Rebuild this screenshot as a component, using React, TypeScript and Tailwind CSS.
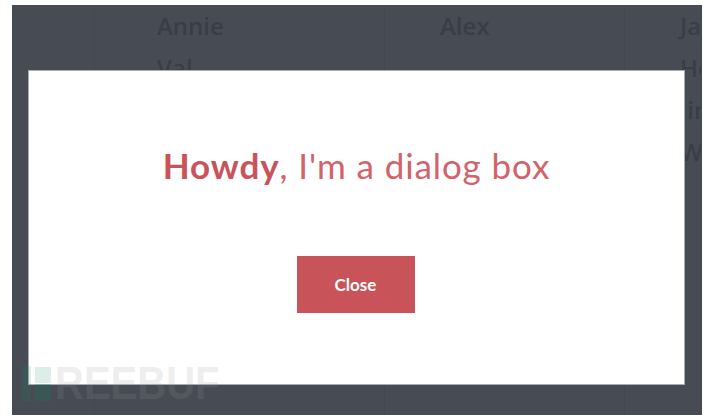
import { useState } from "react";

const columns = [
  { width: "w-[83px]", pad: "pl-0", rows: [] as string[] },
  { width: "w-[290px]", pad: "pl-[62px]", rows: ["Annie", "Val"] },
  { width: "w-[240px]", pad: "pl-[55px]", rows: ["Alex"] },
  { width: "flex-1", pad: "pl-[55px]", rows: ["Ja", "Ho", "Jin", "W"] },
];

export default function App() {
  const [open, setOpen] = useState(true);

  return (
    <div className="relative w-[712px] h-[419px] bg-white pt-[5px] pl-[12px] overflow-hidden font-['Lato',sans-serif]">
      <div className="relative w-[690px] h-[410px] bg-[#474c54] overflow-hidden">
        {/* table behind the overlay */}
        <div className="flex h-full">
          {columns.map((col, i) => (
            <div
              key={i}
              className={`${col.width} ${col.pad} h-full border-r border-[#43484f] flex flex-col pt-0 overflow-hidden`}
            >
              {col.rows.map((r) => (
                <div
                  key={r}
                  className="h-[42px] leading-[42px] text-[24px] font-semibold text-[#393e46] whitespace-nowrap font-['Open_Sans',sans-serif]"
                >
                  {r}
                </div>
              ))}
            </div>
          ))}
        </div>

        {open && (
          <div className="absolute left-[16px] top-[65px] w-[657px] h-[315px] bg-white border border-[#a9adb3] flex flex-col items-center">
            <h1 className="mt-[74px] text-[35px] leading-[40px] text-[#d2636a] font-normal tracking-[0.9px]">
              <span className="font-bold text-[#c9535a]">Howdy</span>, I'm a dialog box
            </h1>
            <button
              onClick={() => setOpen(false)}
              className="mt-[71px] -ml-[2px] w-[118px] h-[57px] bg-[#c8545a] text-white text-[17px] font-bold"
            >
              Close
            </button>
          </div>
        )}
      </div>

      {/* watermark */}
      <div className="absolute left-[22px] top-[365px] flex items-end gap-[4px] pointer-events-none">
        <div className="w-[9px] h-[35px] bg-[rgba(0,140,90,0.14)]" />
        <div className="flex flex-col gap-[1px]">
          <div className="w-[16px] h-[16px] bg-[rgba(0,140,90,0.14)]" />
          <div className="w-[16px] h-[17px] bg-[rgba(0,140,90,0.2)]" />
        </div>
        <div className="text-[46px] leading-[36px] font-black tracking-[0px] text-[rgba(150,150,150,0.18)] font-['Liberation_Sans',sans-serif] scale-x-[0.87] origin-left">
          REEBUF
        </div>
      </div>
    </div>
  );
}
